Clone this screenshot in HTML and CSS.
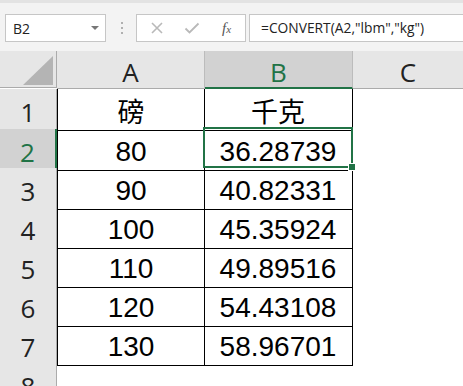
FILE: index.html
```html
<!DOCTYPE html>
<html lang="zh-CN">
<head>
    <meta charset="UTF-8">
    <meta name="viewport" content="width=device-width, initial-scale=1.0">
    <title>CONVERT</title>
    <link rel="stylesheet" href="styles.css">
</head>
<body>
    <header class="toolbar">
        <div class="name-box">
            <span>B2</span>
            <span class="arrow"></span>
        </div>
        <div class="grip"><i></i><i></i><i></i></div>
        <div class="fx-buttons">
            <svg class="btn-cancel" width="14" height="14" viewBox="0 0 14 14">
                <path d="M2 2 L12 12 M12 2 L2 12" stroke="#b9b9b9" stroke-width="1.6" fill="none"/>
            </svg>
            <svg class="btn-ok" width="16" height="14" viewBox="0 0 16 14">
                <path d="M1.5 7.5 L5.5 11.5 L14.5 2.5" stroke="#b9b9b9" stroke-width="1.8" fill="none"/>
            </svg>
            <span class="fx">f<sub>x</sub></span>
        </div>
        <div class="formula">=CONVERT(A2,"lbm","kg")</div>
    </header>

    <main class="sheet">
        <div class="grid">
            <div class="corner"><span class="tri"></span></div>
            <div class="col-head">A</div>
            <div class="col-head active">B</div>
            <div class="col-head">C</div>
        </div>
        <div id="rows"></div>
        <div class="selection"><span class="handle"></span></div>
    </main>

    <script>
        const data = [
            ["磅", "千克"],
            ["80", "36.28739"],
            ["90", "40.82331"],
            ["100", "45.35924"],
            ["110", "49.89516"],
            ["120", "54.43108"],
            ["130", "58.96701"],
        ];

        const rows = document.getElementById("rows");
        data.forEach((row, i) => {
            const line = document.createElement("div");
            line.className = "grid row" + (i === 0 ? " first" : "");
            line.innerHTML = `
                <div class="row-head${i === 1 ? " active" : ""}">${i + 1}</div>
                <div class="cell a${i === 0 ? " cjk" : ""}">${row[0]}</div>
                <div class="cell b${i === 0 ? " cjk" : ""}">${row[1]}</div>
                <div class="cell empty"></div>
            `;
            rows.appendChild(line);
        });

        const last = document.createElement("div");
        last.className = "grid row";
        last.innerHTML = `<div class="row-head">8</div><div class="cell empty"></div>`;
        rows.appendChild(last);
    </script>
</body>
</html>
```

FILE: styles.css
```css
body {
    margin: 0;
    padding: 0;
    width: 463px;
    height: 386px;
    overflow: hidden;
    background-color: #fff;
    font-family: "Liberation Sans", Arial, sans-serif;
}
.toolbar {
    display: flex;
    align-items: center;
    height: 48px;
    border-top: 3px solid #e3e3e3;
    background-color: #f3f3f3;
    padding-left: 5px;
    box-sizing: content-box;
}
.name-box {
    display: flex;
    justify-content: space-between;
    align-items: center;
    width: 99px;
    height: 26px;
    margin-top: 2px;
    border: 1px solid #c6c6c6;
    background: #fff;
    box-sizing: content-box;
    font-family: "Open Sans", sans-serif;
    font-size: 14px;
    color: #222;
}
.name-box span:first-child {
    padding-left: 7px;
}
.name-box .arrow {
    width: 0;
    height: 0;
    margin-right: 6px;
    border-left: 4px solid transparent;
    border-right: 4px solid transparent;
    border-top: 4px solid #777;
}
.grip {
    display: flex;
    flex-direction: column;
    gap: 3px;
    margin: 2px 13px 0 15px;
}
.grip i {
    width: 2px;
    height: 2px;
    background: #b0b0b0;
}
.fx-buttons {
    display: flex;
    align-items: center;
    width: 108px;
    height: 26px;
    margin-top: 2px;
    border: 1px solid #c6c6c6;
    background: #fff;
    box-sizing: content-box;
}
.btn-cancel {
    margin-left: 13px;
}
.btn-ok {
    margin-left: 20px;
}
.fx {
    margin-left: 22px;
    font-family: "Liberation Serif", serif;
    font-style: italic;
    font-size: 15px;
    color: #555;
}
.fx sub {
    font-size: 11px;
    vertical-align: 0;
}
.formula {
    flex: 1;
    height: 26px;
    margin: 2px 0 0 3px;
    padding-left: 11px;
    border: 1px solid #c6c6c6;
    border-right: none;
    background: #fff;
    font-family: "Open Sans", sans-serif;
    font-size: 13.8px;
    line-height: 26px;
    color: #222;
}
.sheet {
    position: relative;
}
.grid {
    display: grid;
    grid-template-columns: 57px 148px 148px 1fr;
}
.corner, .col-head {
    height: 37px;
    background: #e6e6e6;
    border-bottom: 1px solid #ababab;
}
.corner {
    position: relative;
    border-right: 1px solid #ababab;
    box-sizing: border-box;
}
.corner .tri {
    position: absolute;
    right: 3px;
    bottom: 2px;
    width: 0;
    height: 0;
    border-left: 30px solid transparent;
    border-bottom: 29px solid #b4b4b4;
}
.col-head {
    display: flex;
    justify-content: center;
    align-items: center;
    padding-top: 5px;
    box-sizing: border-box;
    height: 38px;
    border-right: 1px solid #bcbcbc;
    font-family: "Open Sans", sans-serif;
    font-size: 26px;
    color: #222;
}
.col-head:last-child {
    border-right: none;
}
.col-head.active {
    background: #d2d2d2;
    color: #217346;
    border-bottom: 2px solid #217346;
}
.row {
    height: 39px;
}
.row.first {
    height: 40px;
}
.row-head {
    display: flex;
    justify-content: center;
    align-items: center;
    padding-top: 5px;
    background: #e6e6e6;
    border-right: 1px solid #ababab;
    border-bottom: 1px solid #bcbcbc;
    box-sizing: border-box;
    font-family: "Open Sans", sans-serif;
    font-size: 26px;
    color: #222;
}
.row-head.active {
    background: #d2d2d2;
    color: #217346;
    border-right: 2px solid #217346;
}
.cell {
    display: flex;
    justify-content: center;
    align-items: center;
    padding-top: 5px;
    box-sizing: border-box;
    font-size: 28px;
    color: #000;
}
.cell.a {
    border-left: 1px solid #000;
    border-right: 1px solid #000;
    border-bottom: 1px solid #000;
}
.cell.b {
    border-right: 1px solid #000;
    border-bottom: 1px solid #000;
    margin-left: -1px;
}
.cell.cjk {
    font-family: "Noto Sans CJK SC", sans-serif;
    font-size: 27px;
    padding-top: 2px;
}
.cell.empty {
    grid-column: span 1;
}
.row:last-child .cell.empty {
    grid-column: 2 / 5;
}
.selection {
    position: absolute;
    left: 203px;
    top: 76px;
    width: 146px;
    height: 37px;
    border: 2px solid #217346;
}
.selection .handle {
    position: absolute;
    right: -5px;
    bottom: -5px;
    width: 6px;
    height: 6px;
    background: #217346;
    border: 1px solid #fff;
}
```
